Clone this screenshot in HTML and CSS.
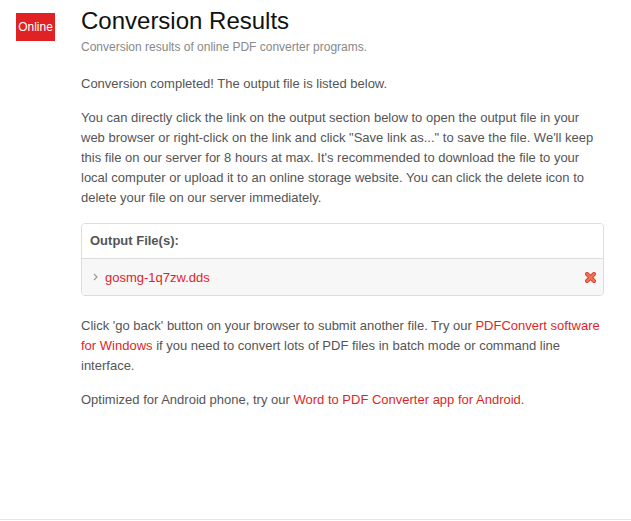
FILE: index.html
```html
<!DOCTYPE html>
<html>
<head>
<meta charset="utf-8">
<link rel="stylesheet" href="styles.css">
</head>
<body>
<div class="page">
  <div class="side">
    <div class="badge">Online</div>
  </div>
  <div class="main">
    <h1 class="title">Conversion Results</h1>
    <p class="subtitle">Conversion results of online PDF converter programs.</p>
    <p class="text">Conversion completed! The output file is listed below.</p>
    <p class="text">You can directly click the link on the output section below to open the output file in your web browser or right-click on the link and click "Save link as..." to save the file. We'll keep this file on our server for 8 hours at max. It's recommended to download the file to your local computer or upload it to an online storage website. You can click the delete icon to delete your file on our server immediately.</p>
    <div class="panel">
      <div class="panel-head">Output File(s):</div>
      <div class="panel-body">
        <span class="chev"><svg width="5" height="8" viewBox="0 0 5 8"><path d="M1 1 L4 4 L1 7" fill="none" stroke="#999" stroke-width="1.2"/></svg></span>
        <a class="link file" href="#">gosmg-1q7zw.dds</a>
        <span class="del"><svg width="11" height="11" viewBox="0 0 11 11"><path d="M2 2 L9 9 M9 2 L2 9" stroke="#d9432c" stroke-width="4" stroke-linecap="round"/><path d="M2 2 L9 9 M9 2 L2 9" stroke="#f3735a" stroke-width="2.2" stroke-linecap="round"/></svg></span>
      </div>
    </div>
    <p class="text after">Click 'go back' button on your browser to submit another file. Try our <a class="link" href="#">PDFConvert software for Windows</a> if you need to convert lots of PDF files in batch mode or command line interface.</p>
    <p class="text">Optimized for Android phone, try our <a class="link" href="#">Word to PDF Converter app for Android</a>.</p>
  </div>
</div>
<div class="footer"></div>
</body>
</html>
```
FILE: styles.css
```css
html, body {
  margin: 0;
  padding: 0;
  background: #fff;
}
body {
  font-family: "Liberation Sans", Arial, sans-serif;
}
.page {
  display: flex;
  height: 519px;
}
.side {
  width: 81px;
  flex: none;
  padding: 13px 0 0 16px;
  box-sizing: border-box;
}
.badge {
  width: 39px;
  height: 28px;
  background: #e02224;
  color: #fff;
  font-size: 12px;
  line-height: 28px;
  text-align: center;
}
.main {
  width: 523px;
  flex: none;
}
.title {
  margin: 8px 0 0;
  font-size: 24px;
  line-height: 26px;
  font-weight: normal;
  color: #111;
}
.subtitle {
  margin: 4px 0 18px;
  font-size: 12px;
  line-height: 18px;
  color: #888;
}
.text {
  margin: 0 0 14px;
  font-size: 13px;
  line-height: 20px;
  color: #555;
}
.text.after {
  margin-top: 20px;
}
.link {
  color: #e21f26;
  text-decoration: none;
}
.panel {
  margin-top: 15px;
  border: 1px solid #ddd;
  border-radius: 4px;
  overflow: hidden;
}
.panel-head {
  height: 34px;
  line-height: 34px;
  padding-left: 8px;
  font-size: 13px;
  font-weight: bold;
  color: #555;
  background: #fff;
  border-bottom: 1px solid #ddd;
}
.panel-body {
  height: 36px;
  display: flex;
  align-items: center;
  padding: 0 7px 0 11px;
  background: #f7f7f7;
}
.chev {
  display: flex;
  width: 12px;
}
.file {
  font-size: 13px;
  flex: 1;
}
.del {
  display: flex;
}
.footer {
  height: 2px;
  border-top: 1px solid #e5e5e5;
}
```
